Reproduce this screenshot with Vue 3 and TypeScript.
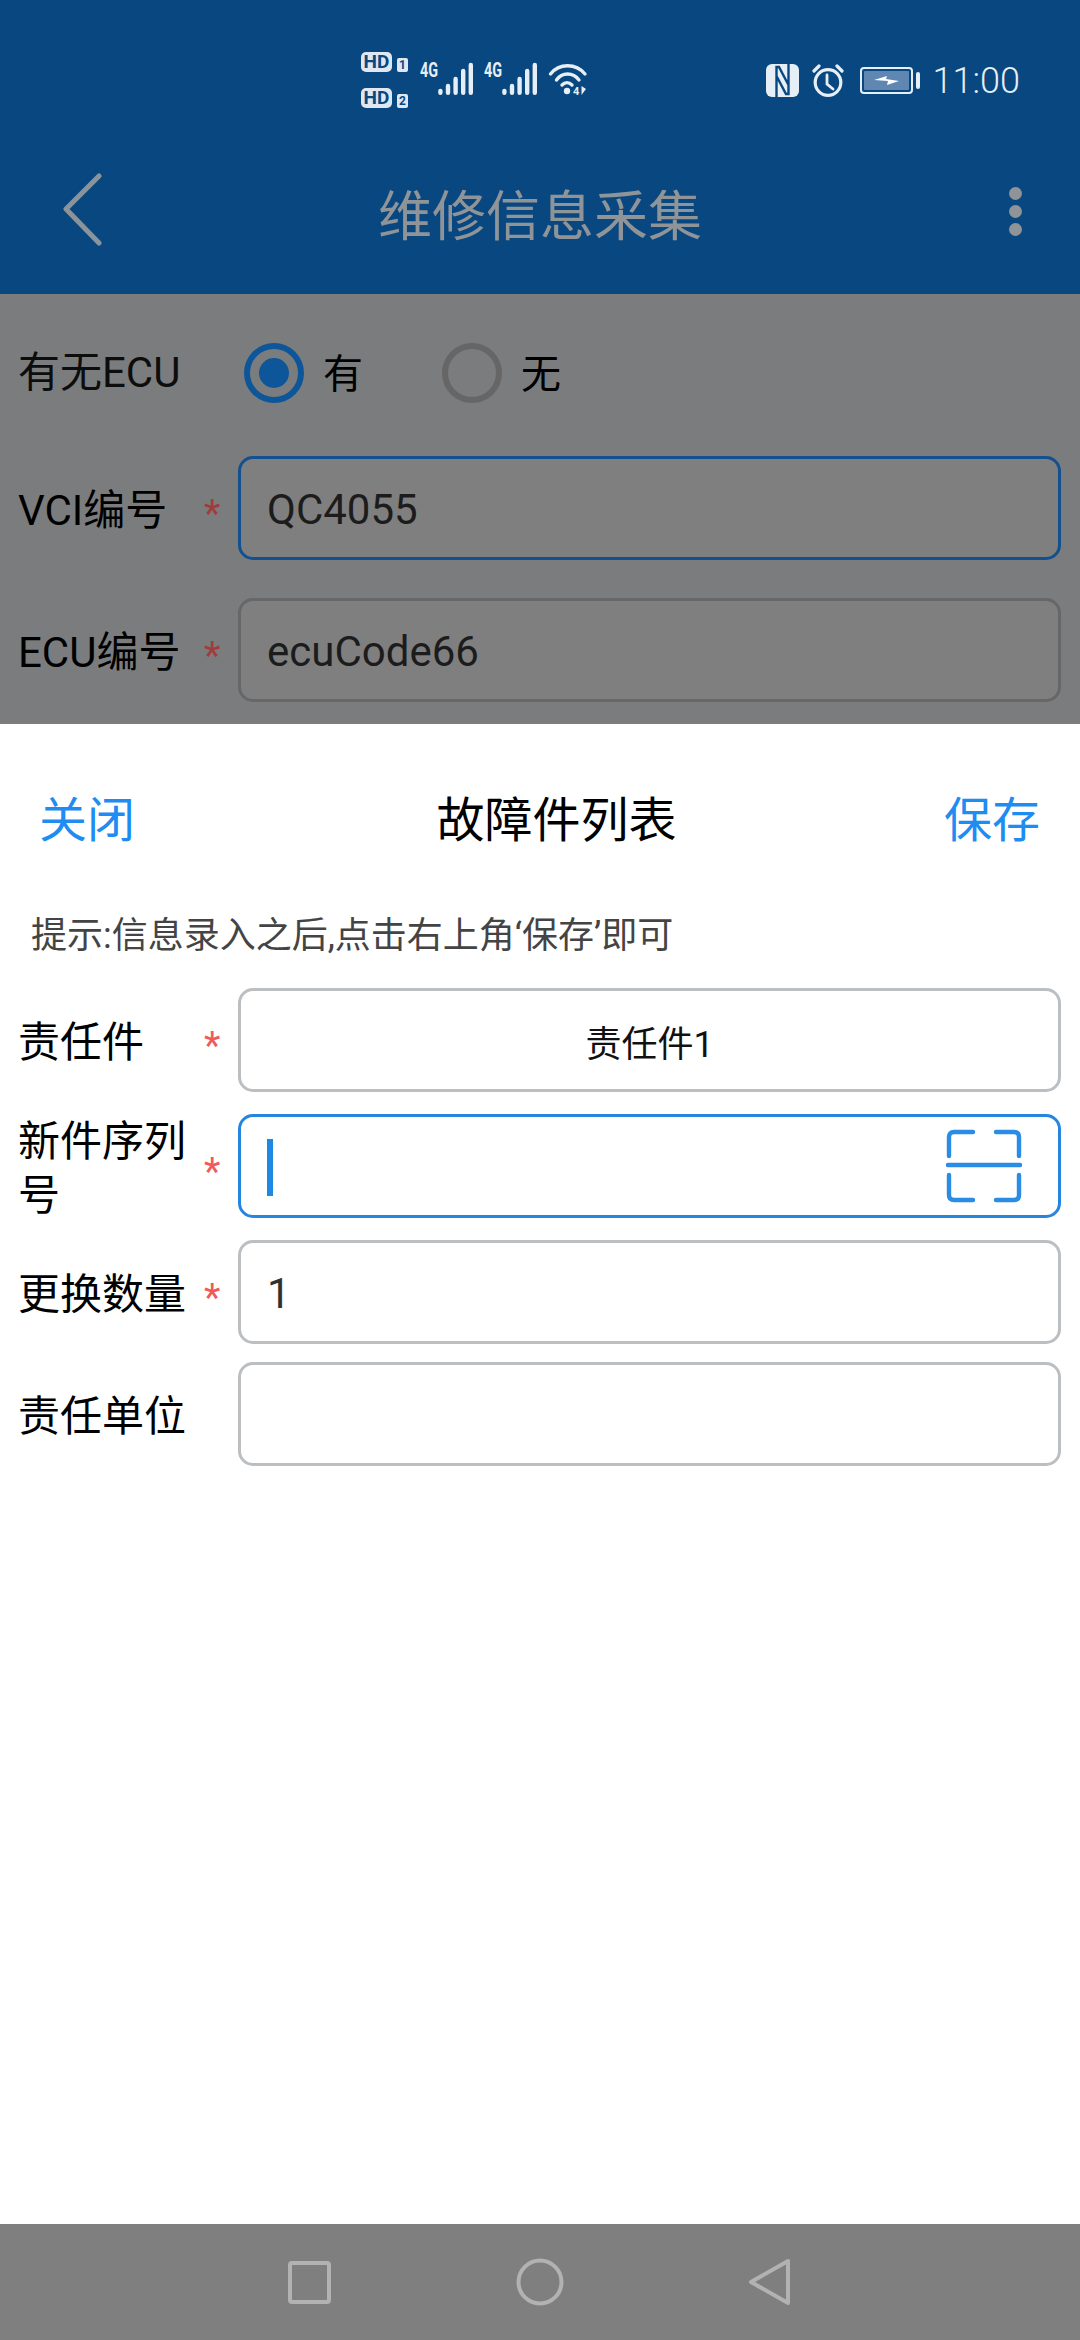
<script setup lang="ts">
type FormRow = {
  label: string
  required: boolean
  value: string
  focused?: boolean
  centered?: boolean
  scan?: boolean
  tight?: boolean
}

const topRows: FormRow[] = [
  { label: 'VCI编号', required: true, value: 'QC4055', focused: true },
  { label: 'ECU编号', required: true, value: 'ecuCode66' },
]

const sheetRows: FormRow[] = [
  { label: '责任件', required: true, value: '责任件1', centered: true },
  { label: '新件序列号', required: true, value: '', focused: true, scan: true },
  { label: '更换数量', required: true, value: '1' },
  { label: '责任单位', required: false, value: '', tight: true },
]

const signalBars = [
  { x: 2.4, top: 29 },
  { x: 10, top: 24 },
  { x: 17.6, top: 17 },
  { x: 25.2, top: 9 },
  { x: 32.8, top: 3 },
]
</script>

<template>
  <div class="phone">
    <header class="appbar">
      <div class="status">
        <div class="status-group">
          <div class="hd-col">
            <div class="hd-line"><span class="hd">HD</span><span class="sim">1</span></div>
            <div class="hd-line"><span class="hd">HD</span><span class="sim">2</span></div>
          </div>
          <div v-for="n in 2" :key="n" class="net">
            <span class="net-label"><b>4G</b></span>
            <svg width="36" height="33" viewBox="0 0 36 33">
              <line
                v-for="bar in signalBars"
                :key="bar.x"
                :x1="bar.x"
                :x2="bar.x"
                :y1="bar.top"
                y2="30.8"
                stroke="#e6eef6"
                stroke-width="4.4"
                stroke-linecap="round"
              />
            </svg>
          </div>
          <svg class="wifi" width="40" height="33" viewBox="0 0 40 33" fill="none" stroke="#e6eef6" stroke-width="3.4" stroke-linecap="round">
            <path d="M2.5 12 C11 1 28 1 37 12" />
            <path d="M8.5 18 C14 10 25 10 31 18" />
            <path d="M14 23 C17 20 21 20 24 23" />
            <circle cx="19" cy="29" r="3.2" fill="#e6eef6" stroke="none" />
            <text x="25" y="33" class="wifi-text" fill="#e6eef6" stroke="none">4</text>
            <path d="M33.5 24 V33 L38 27 Z" fill="#e6eef6" stroke="none" />
          </svg>
        </div>
        <div class="status-group status-right">
          <svg width="33" height="33" viewBox="0 0 33 33" fill="none">
            <rect width="33" height="33" rx="6" fill="#e6eef6" />
            <path d="M10.5 33 V12 L20 30 H22.5 V0 M22.5 21 L13 3 H10.5 V12" stroke="#08477f" stroke-width="2.4" />
          </svg>
          <svg width="32" height="33" viewBox="0 0 32 33" fill="none" stroke="#e6eef6" stroke-width="3.2" stroke-linecap="round">
            <circle cx="16" cy="18.5" r="12.8" />
            <path d="M15 11 V20 L21 25" stroke-width="2.8" />
            <path d="M2 7 L7 2 M25 2 L30 7" />
          </svg>
          <div class="battery">
            <div class="battery-body">
              <div class="battery-fill">
                <svg width="25" height="9" viewBox="0 0 25 9"><path d="M0 4 L13 0 L12 3 L25 5 L13 9 L14 5 Z" fill="#fff" /></svg>
              </div>
            </div>
            <span class="battery-tip"></span>
          </div>
          <span class="clock">11:00</span>
        </div>
      </div>
      <div class="toolbar">
        <svg class="back" width="39" height="73" viewBox="0 0 39 73" fill="none" stroke="#8d9499" stroke-width="5" stroke-linecap="round" stroke-linejoin="round">
          <path d="M36 3 L3 36 L36 70" />
        </svg>
        <h1 class="page-title">维修信息采集</h1>
        <div class="dots"><i></i><i></i><i></i></div>
      </div>
    </header>

    <section class="backdrop">
      <div class="radio-row">
        <span class="label label-radio">有无ECU</span>
        <span class="radio radio-on"><i></i></span>
        <span class="radio-text">有</span>
        <span class="radio radio-off"></span>
        <span class="radio-text">无</span>
      </div>
      <div v-for="row in topRows" :key="row.label" class="row">
        <span class="label">{{ row.label }}</span>
        <span class="star">*</span>
        <div class="field" :class="{ 'field-focus': row.focused }">{{ row.value }}</div>
      </div>
    </section>

    <main class="sheet">
      <div class="sheet-head">
        <span class="sheet-action">关闭</span>
        <span class="sheet-title">故障件列表</span>
        <span class="sheet-action">保存</span>
      </div>
      <p class="hint">提示:信息录入之后,点击右上角‘保存’即可</p>
      <div class="sheet-rows">
        <div v-for="row in sheetRows" :key="row.label" class="row" :class="{ 'row-tight': row.tight }">
          <span class="label">{{ row.label }}</span>
          <span class="star">{{ row.required ? '*' : '' }}</span>
          <div class="field" :class="{ 'field-focus': row.focused, 'field-center': row.centered }">
            <span v-if="row.focused" class="cursor"></span>
            {{ row.value }}
            <svg v-if="row.scan" class="scan" width="76" height="74" viewBox="0 0 76 74" fill="none" stroke="#2a8ce5" stroke-width="4.4" stroke-linecap="round">
              <path d="M3 27 V8 Q3 3 8 3 H27 M50 3 H68 Q73 3 73 8 V27" />
              <path d="M2 36 H74" />
              <path d="M3 46 V66 Q3 71 8 71 H27 M50 71 H68 Q73 71 73 66 V46" />
            </svg>
          </div>
        </div>
      </div>
    </main>

    <nav class="navbar">
      <svg width="48" height="48" viewBox="0 0 48 48" fill="none" stroke="#b2b2b2" stroke-width="4" stroke-linejoin="round">
        <rect x="4" y="5" width="39" height="39" rx="2" />
      </svg>
      <svg width="48" height="48" viewBox="0 0 48 48" fill="none" stroke="#b2b2b2" stroke-width="4">
        <circle cx="24" cy="24" r="21.5" />
      </svg>
      <svg width="48" height="48" viewBox="0 0 48 48" fill="none" stroke="#b2b2b2" stroke-width="4" stroke-linejoin="round">
        <path d="M42 3 V45 L5 24 Z" />
      </svg>
    </nav>
  </div>
</template>

<style scoped>
.phone {
  width: 1080px;
  height: 2340px;
  display: flex;
  flex-direction: column;
  background: #fff;
  font-family: Roboto, "Noto Sans CJK SC", sans-serif;
  color: #000;
  overflow: hidden;
}

.appbar {
  height: 294px;
  background: #08477f;
  flex-shrink: 0;
}

.status {
  height: 130px;
  padding: 30px 60px 0 361px;
  box-sizing: border-box;
  display: flex;
  align-items: center;
  justify-content: space-between;
  color: #e6eef6;
}

.status-group {
  display: flex;
  align-items: center;
  gap: 10px;
}

.status-right {
  gap: 13px;
}

.hd-col {
  display: flex;
  flex-direction: column;
  gap: 16px;
  margin-right: 2px;
}

.hd-line {
  display: flex;
  align-items: flex-end;
  gap: 5px;
}

.hd {
  width: 31px;
  height: 20px;
  border-radius: 5px;
  background: #dfe8f2;
  color: #08477f;
  font-size: 19px;
  font-weight: 700;
  line-height: 20px;
  text-align: center;
}

.sim {
  width: 11px;
  height: 14px;
  border-radius: 2px;
  background: #dfe8f2;
  color: #08477f;
  font-size: 12px;
  font-weight: 700;
  line-height: 14px;
  text-align: center;
}

.net {
  display: flex;
  align-items: flex-start;
  height: 33px;
  margin-top: -3px;
}

.net-label {
  width: 18px;
  height: 16px;
  font-size: 20px;
  line-height: 16px;
}

.net-label b {
  display: inline-block;
  transform: scaleX(0.72);
  transform-origin: left center;
}

.wifi {
  margin-top: -3px;
}

.wifi-text {
  font-size: 11px;
  font-weight: 700;
}

.battery {
  display: flex;
  align-items: center;
  gap: 3px;
  margin-left: 3px;
}

.battery-body {
  width: 53px;
  height: 27px;
  box-sizing: border-box;
  border: 2px solid #e6eef6;
  border-radius: 4px;
  padding: 2px;
  display: flex;
}

.battery-fill {
  flex: 1;
  background: #5f87b2;
  border-radius: 1px;
  display: flex;
  align-items: center;
  justify-content: center;
}

.battery-tip {
  width: 4px;
  height: 17px;
  border-radius: 2px;
  background: #e6eef6;
}

.clock {
  font-size: 36px;
  font-weight: 300;
  line-height: 40px;
  margin-top: 2px;
}

.toolbar {
  height: 164px;
  position: relative;
  display: flex;
  align-items: center;
  justify-content: space-between;
  padding: 0 58px 0 63px;
}

.page-title {
  position: absolute;
  left: 0;
  right: 0;
  margin: 0;
  text-align: center;
  font-size: 54px;
  font-weight: 400;
  color: #8f9499;
}

.back {
  margin-top: -5px;
}

.dots {
  display: flex;
  flex-direction: column;
  gap: 5px;
  margin-top: -2px;
}

.dots i {
  width: 13px;
  height: 13px;
  border-radius: 50%;
  background: #8f9499;
}

.backdrop {
  height: 430px;
  flex-shrink: 0;
  box-sizing: border-box;
  padding: 49px 19px 0;
  background: #7b7c7d;
  display: flex;
  flex-direction: column;
  gap: 38px;
}

.radio-row {
  height: 60px;
  margin-bottom: 15px;
  display: flex;
  align-items: center;
}

.label {
  font-size: 42px;
  line-height: 54px;
  color: #000;
  margin-left: -1px;
}

.label-radio {
  width: 226px;
  flex-shrink: 0;
  color: #0d0d0d;
}

.radio {
  width: 60px;
  height: 60px;
  box-sizing: border-box;
  border-radius: 50%;
  flex-shrink: 0;
  display: flex;
  align-items: center;
  justify-content: center;
}

.radio-on {
  border: 6px solid #0d5699;
}

.radio-on i {
  width: 30px;
  height: 30px;
  border-radius: 50%;
  background: #0d5699;
}

.radio-off {
  border: 6px solid #666;
}

.radio-text {
  width: 138px;
  padding-left: 19px;
  box-sizing: border-box;
  font-size: 40px;
  margin-top: -4px;
}

.row {
  height: 104px;
  display: flex;
  align-items: center;
}

.row .label {
  width: 175px;
  padding-top: 5px;
  box-sizing: border-box;
  flex-shrink: 0;
}

.star {
  width: 45px;
  flex-shrink: 0;
  padding-left: 11px;
  box-sizing: border-box;
  color: #f25a5a;
  font-size: 38px;
  line-height: 38px;
  height: 26px;
}

.backdrop .star {
  color: #a23c3c;
}

.field {
  flex: 1;
  height: 104px;
  box-sizing: border-box;
  border: 3px solid #bcbfc2;
  border-radius: 15px;
  padding: 2px 0 0 26px;
  display: flex;
  align-items: center;
  position: relative;
  font-size: 42px;
  color: #303133;
}

.backdrop .field {
  background: #7f7f7f;
  border-color: #666769;
  color: #1c1c1c;
}

.backdrop .field-focus {
  border-color: #12508f;
}

.field-focus {
  border-color: #2486e0;
}

.field-center {
  justify-content: center;
  padding-left: 0;
  font-size: 36px;
  color: #111;
}

.cursor {
  width: 6px;
  height: 57px;
  background: #1e88e5;
}

.scan {
  position: absolute;
  right: 36px;
  top: 12px;
}

.sheet {
  flex: 1;
  padding: 0 19px;
  background: #fff;
}

.sheet-head {
  height: 184px;
  display: flex;
  align-items: center;
  padding: 0 21px 0 20px;
}

.sheet-action {
  font-size: 48px;
  color: #1e8cf0;
}

.sheet-title {
  flex: 1;
  text-align: center;
  font-size: 48px;
  padding-left: 34px;
}

.hint {
  margin: 4px 0 0 12px;
  height: 76px;
  line-height: 48px;
  font-size: 36px;
  color: #444;
}

.sheet-rows {
  display: flex;
  flex-direction: column;
  gap: 22px;
}

.row-tight {
  margin-top: -4px;
}

.navbar {
  height: 116px;
  flex-shrink: 0;
  background: #7f7f7f;
  display: flex;
  align-items: center;
  justify-content: center;
  gap: 182px;
}
</style>

<style>
html,
body {
  margin: 0;
  background: #fff;
}
</style>
